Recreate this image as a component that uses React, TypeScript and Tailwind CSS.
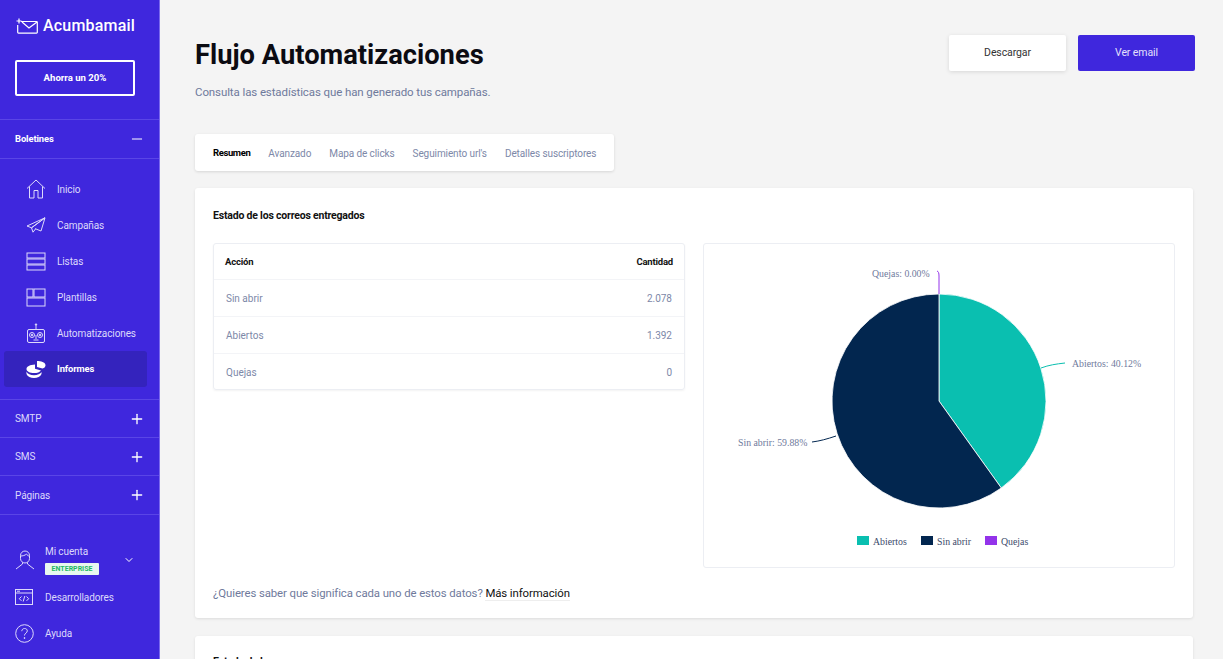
import { Minus, Plus, ChevronDown } from 'lucide-react';

function IconHome() {
  return (
    <svg width="20" height="20" viewBox="0 0 20 20" fill="none" stroke="currentColor" strokeWidth="1">
      <path d="M1 9.500 10 1l9 8.500M3.500 7.500V19h4.500v-7.500h4V19h4.500V7.500" />
    </svg>
  );
}

function IconPlane() {
  return (
    <svg width="20" height="16" viewBox="0 0 20 16" fill="none" stroke="currentColor" strokeWidth="1">
      <path d="M19 .8 1 9l4.500 1.800L19 .8ZM19 .8 5.500 10.800 7 15.200l2.500-3.200M19 .8 15 14 9 11.600" />
    </svg>
  );
}

function IconList() {
  return (
    <svg width="20" height="19" viewBox="0 0 20 19" fill="none" stroke="currentColor" strokeWidth="1">
      <rect x="1" y="1" width="18" height="5" />
      <rect x="1" y="7" width="18" height="5" />
      <rect x="1" y="13" width="18" height="5" />
    </svg>
  );
}

function IconTemplate() {
  return (
    <svg width="20" height="19" viewBox="0 0 20 19" fill="none" stroke="currentColor" strokeWidth="1">
      <rect x="1" y="1" width="6" height="8" />
      <rect x="8" y="1" width="11" height="8" />
      <rect x="1" y="10" width="18" height="8" />
    </svg>
  );
}

function IconRobot() {
  return (
    <svg width="20" height="20" viewBox="0 0 20 20" fill="none" stroke="currentColor" strokeWidth="1">
      <path d="M10 1v6" />
      <circle cx="10" cy="1.500" r=".7" fill="currentColor" />
      <rect x="1.500" y="6.500" width="17" height="13" rx="1.500" />
      <circle cx="6" cy="12" r="2.500" />
      <circle cx="14" cy="12" r="2.500" />
      <circle cx="6" cy="12" r=".8" fill="currentColor" />
      <circle cx="14" cy="12" r=".8" fill="currentColor" />
      <path d="M10 12v4M7.500 17h5" />
    </svg>
  );
}

function IconPie() {
  return (
    <svg width="20" height="17" viewBox="0 0 20 17" fill="white">
      <path d="M11 0c4 0 8 1 8.500 4 .2 1.500-1 3-3 3.500L11 6V0Z" />
      <path d="M9 3.500v4.200l6 1.700C14 11 11 12 8 12 4 12 .5 10.500.5 8S4 3.700 9 3.500Z" />
      <path d="M.5 10.500C1.500 13 4.500 14.200 8 14.200s6.500-1.200 7.500-3.200v2C14.500 15.500 11.500 17 8 17s-6.500-1.500-7.500-4v-2.500Z" />
    </svg>
  );
}

function IconUser() {
  return (
    <svg width="20" height="20" viewBox="0 0 20 20" fill="none" stroke="currentColor" strokeWidth="1">
      <path d="M5.500 5.500C5.500 3 7.500 1 10 1s4.500 2 4.500 4.500v3c0 2.500-2 4.500-4.500 4.500S5.500 11 5.500 8.500v-3Z" />
      <path d="M5.500 6c2 0 4.500-.5 6-2 .5 1 1.500 2 3 2" />
      <path d="M7.500 12.500V14L1 19M12.500 12.500V14l6.500 5" />
    </svg>
  );
}

function IconCode() {
  return (
    <svg width="18" height="16" viewBox="0 0 18 16" fill="none" stroke="currentColor" strokeWidth="1">
      <rect x=".5" y=".5" width="17" height="15" />
      <path d="M.5 4h17M2 2.200h3" />
      <path d="m6.500 7.500-2.200 2.200 2.200 2.200M11.500 7.500l2.200 2.200-2.200 2.200M9.800 7l-1.600 5.500" />
    </svg>
  );
}

function IconHelp() {
  return (
    <svg width="19" height="19" viewBox="0 0 19 19" fill="none" stroke="currentColor" strokeWidth="1">
      <circle cx="9.500" cy="9.500" r="8.800" />
      <path d="M6.800 7.200c0-1.600 1.200-2.700 2.800-2.700s2.700 1 2.700 2.400c0 2.100-2.800 2.300-2.800 4.600" />
      <circle cx="9.500" cy="14" r=".5" fill="currentColor" />
    </svg>
  );
}

function IconLogo() {
  return (
    <svg width="22" height="16" viewBox="0 0 22 16" fill="none" stroke="white" strokeWidth="1.200">
      <path d="M5 3.500h15.500a.8.8 0 0 1 .8.800v10a.8.8 0 0 1-.8.800H2.500a.8.8 0 0 1-.8-.800V7" />
      <path d="m6 4 7 6 8-6" />
      <path d="M3 .5v5M.5 3h5" />
    </svg>
  );
}

const navItems = [
  { label: 'Inicio', icon: <IconHome /> },
  { label: 'Campañas', icon: <IconPlane /> },
  { label: 'Listas', icon: <IconList /> },
  { label: 'Plantillas', icon: <IconTemplate /> },
  { label: 'Automatizaciones', icon: <IconRobot /> },
];

const tabs = ['Avanzado', 'Mapa de clicks', "Seguimiento url's", 'Detalles suscriptores'];

const rows = [
  ['Sin abrir', '2.078'],
  ['Abiertos', '1.392'],
  ['Quejas', '0'],
];

function Section({ label, last }: { label: string; last?: boolean }) {
  return (
    <div className={`flex items-center justify-between border-b border-[#5a45e6] pl-[15px] pr-[14px] text-[10px] tracking-[-0.1px] text-[#ddd9fb] ${last ? 'h-[39px]' : 'h-[38px]'}`}>
      <span>{label}</span>
      <Plus size={16} strokeWidth={2} className="text-white" />
    </div>
  );
}

function PieChart() {
  return (
    <svg width="472" height="324" viewBox="0 0 472 324" className="block">
      <g transform="translate(-1,-1)" fontFamily="'Liberation Serif', serif" fontSize="9.800" fill="#6f7a9c">
        <path d="M236 158 V51 A107 107 0 0 1 298.300 245 Z" fill="#0abfb0" stroke="white" strokeWidth=".8" />
        <path d="M236 158 L298.300 245 A107 107 0 1 1 236 51 Z" fill="#02264f" stroke="white" strokeWidth=".8" />
        <path d="M236 51 V33 C236 30 235.500 28.500 234 28" fill="none" stroke="#9333ea" strokeWidth="1" />
        <path d="M338 125 C346 122 353 121 362 120" fill="none" stroke="#0abfb0" strokeWidth="1" />
        <path d="M133 193 C124 196 117 198 109 199" fill="none" stroke="#02264f" strokeWidth="1" />
        <text x="169" y="34">Quejas: 0.00%</text>
        <text x="369" y="124">Abiertos: 40.12%</text>
        <text x="35" y="203">Sin abrir: 59.88%</text>
        <rect x="154" y="293" width="12" height="9" fill="#0abfb0" />
        <text x="170" y="302" fill="#3b4a6b">Abiertos</text>
        <rect x="218" y="293" width="12" height="9" fill="#02264f" />
        <text x="234" y="302" fill="#3b4a6b">Sin abrir</text>
        <rect x="282" y="293" width="12" height="9" fill="#9333ea" />
        <text x="298" y="302" fill="#3b4a6b">Quejas</text>
      </g>
    </svg>
  );
}

export default function App() {
  return (
    <div className="flex h-[659px] w-[1223px] overflow-hidden bg-[#f4f4f4] font-['Roboto',sans-serif]">
      {/* Sidebar */}
      <aside className="w-[160px] shrink-0 border-r border-[#7a68ee] bg-[#3f27dd] text-white">
        <div className="flex h-[52px] items-center gap-[5px] pl-[16px]">
          <IconLogo />
          <span className="text-[16px] font-medium tracking-[0.2px]">Acumbamail</span>
        </div>
        <div className="mx-[15px] mt-[8px] flex h-[36px] w-[120px] items-center justify-center rounded-[2px] border-2 border-white pt-px text-[9.600px] font-bold">
          Ahorra un 20%
        </div>
        <div className="mt-[23px] flex h-[40px] items-center justify-between border-y border-[#5a45e6] pl-[15px] pr-[14px] text-[9.400px] font-bold tracking-[-0.1px]">
          <span className="pt-px">Boletines</span>
          <Minus size={16} strokeWidth={1.500} />
        </div>
        <nav className="border-b border-[#5a45e6] pb-[12px] pl-[4px] pr-[12px] pt-[12px]">
          {navItems.map((item) => (
            <div key={item.label} className="flex h-[36px] items-center text-[10px] tracking-[-0.1px] text-[#ddd9fb]">
              <span className="flex w-[53px] shrink-0 justify-start pl-[22px]">{item.icon}</span>
              {item.label}
            </div>
          ))}
          <div className="flex h-[36px] items-center rounded-[3px] bg-[#3423bd] text-[9.400px] font-bold tracking-[-0.1px]">
            <span className="flex w-[53px] shrink-0 justify-start pl-[22px]"><IconPie /></span>
            Informes
          </div>
        </nav>
        <Section label="SMTP" />
        <Section label="SMS" />
        <Section label="Páginas" last />
        <div className="mt-[25px] flex h-[39px] items-center pl-[15px] text-[10px] tracking-[-0.1px] text-[#ddd9fb]">
          <span className="flex w-[30px]"><IconUser /></span>
          <div className="flex flex-col gap-[4px] pt-px">
            <span className="leading-[14px]">Mi cuenta</span>
            <span className="flex h-[12px] w-[54px] items-center justify-center rounded-[1px] bg-[#e8f8ef] text-[7px] font-bold tracking-normal text-[#1fb866]">ENTERPRISE</span>
          </div>
          <ChevronDown size={12} strokeWidth={2} className="ml-[24px] text-white" />
        </div>
        <div className="flex h-[36px] items-center pl-[15px] text-[10px] tracking-[-0.1px] text-[#ddd9fb]">
          <span className="flex w-[30px]"><IconCode /></span>
          Desarrolladores
        </div>
        <div className="flex h-[36px] items-center pl-[15px] text-[10px] tracking-[-0.1px] text-[#ddd9fb]">
          <span className="flex w-[30px]"><IconHelp /></span>
          Ayuda
        </div>
      </aside>

      {/* Main */}
      <main className="min-w-0 flex-1 pl-[35px] pr-[28px]">
        <header className="h-[134px]">
          <div className="flex items-start justify-between pt-[35px]">
            <h1 className="mt-px text-[27.300px] font-bold leading-[38px] text-[#0b0b12]">Flujo Automatizaciones</h1>
            <div className="flex gap-[12px]">
              <button className="h-[36px] w-[117px] rounded-[2px] bg-white text-[10.500px] tracking-[-0.1px] text-[#333] shadow-[0_1px_4px_rgba(0,0,0,0.12)]">Descargar</button>
              <button className="h-[36px] w-[117px] rounded-[2px] bg-[#3f27dd] text-[10.500px] tracking-[-0.1px] text-[#e4e0fc]">Ver email</button>
            </div>
          </div>
          <p className="mt-[10px] text-[11.500px] tracking-[-0.1px] text-[#6f7a9c]">Consulta las estadísticas que han generado tus campañas.</p>
        </header>

        <div className="flex h-[37px] w-[419px] items-center gap-[18px] whitespace-nowrap rounded-[3px] bg-white pl-[18px] pt-px text-[10px] tracking-[-0.1px] text-[#7d88a8] shadow-[0_1px_3px_rgba(0,0,0,0.12)]">
          <span className="text-[9.500px] font-bold tracking-[-0.4px] text-black">Resumen</span>
          {tabs.map((tab) => (
            <span key={tab}>{tab}</span>
          ))}
        </div>

        <section className="mr-[2px] mt-[17px] h-[430px] rounded-[3px] bg-white px-[18px] shadow-[0_1px_3px_rgba(0,0,0,0.1)]">
          <h2 className="pt-[20px] text-[10.500px] font-bold leading-[16px] tracking-[-0.2px] text-[#111]">Estado de los correos entregados</h2>
          <div className="mt-[19px] flex gap-[18px]">
            <div className="h-[147px] w-[472px] rounded-[3px] border border-[#eceef3] shadow-[0_1px_2px_rgba(0,0,0,0.05)]">
              <div className="flex h-[36px] items-center justify-between border-b border-[#f3f4f7] px-[11px] pt-px text-[9.500px] font-bold tracking-[-0.2px] text-[#111]">
                <span>Acción</span>
                <span>Cantidad</span>
              </div>
              {rows.map(([name, value], i) => (
                <div key={name} className={`flex h-[37px] items-center justify-between px-[12px] text-[10px] text-[#7d88a8] ${i < 2 ? 'border-b border-[#f3f4f7]' : ''}`}>
                  <span>{name}</span>
                  <span>{value}</span>
                </div>
              ))}
            </div>
            <div className="h-[325px] w-[472px] rounded-[3px] border border-[#eceef3]">
              <PieChart />
            </div>
          </div>
          <p className="mt-[17px] text-[11.400px] tracking-[-0.1px] text-[#6f7a9c]">
            ¿Quieres saber que significa cada uno de estos datos? <span className="border-b border-[#eee] text-[#111]">Más información</span>
          </p>
        </section>

        <section className="mr-[2px] mt-[18px] h-[100px] rounded-[3px] bg-white px-[18px] shadow-[0_1px_3px_rgba(0,0,0,0.1)]">
          <h2 className="pt-[18px] text-[10.500px] font-bold leading-[16px] tracking-[-0.2px] text-[#111]">Estado de los correos</h2>
        </section>
      </main>
    </div>
  );
}
